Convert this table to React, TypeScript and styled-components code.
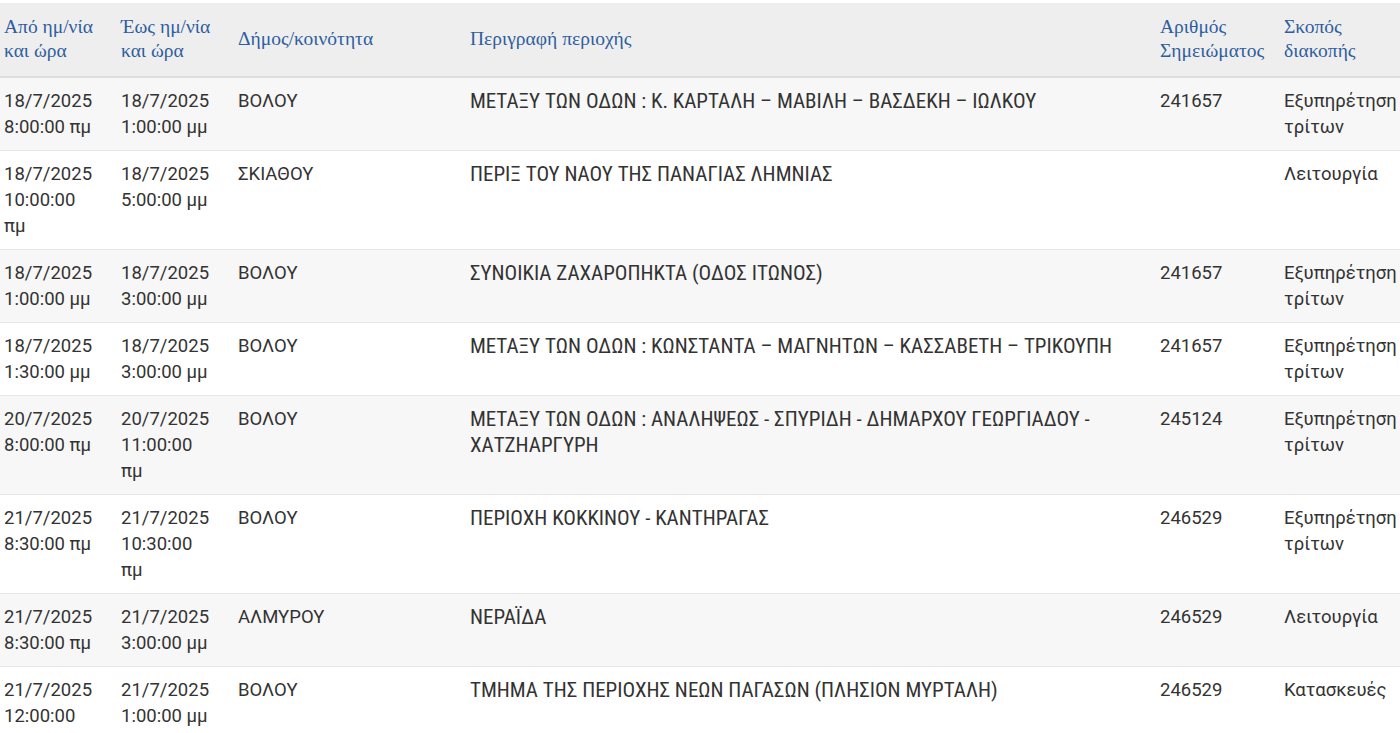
import React, { FC } from 'react'
import styled, { createGlobalStyle } from 'styled-components'

const GlobalStyle = createGlobalStyle`
    html, body {
        margin: 0;
        padding: 0;
        background: #fff;
        overflow: hidden;
    }
`

const Wrapper = styled.div`
    width: 1400px;
    padding-top: 3px;
    overflow: hidden;
    background: #fff;
`
const Table = styled.table`
    width: 1420px;
    table-layout: fixed;
    border-collapse: collapse;
    border-spacing: 0;
`
const HeadCell = styled.th`
    background: #eeeeee;
    border-bottom: 2px solid #dddddd;
    padding: 12px 20px 13px 4px;
    text-align: left;
    vertical-align: middle;
    font-family: "Liberation Serif", "DejaVu Serif", serif;
    font-weight: normal;
    font-size: 19.5px;
    line-height: 24px;
    color: #2f5e9e;
`
const Row = styled.tr<{ $striped: boolean }>`
    background: ${p => (p.$striped ? '#f7f7f7' : '#ffffff')};
    border-bottom: 1px solid #e6e6e6;
`
const Cell = styled.td<{ $narrow?: boolean }>`
    padding: 10px 20px 10px 4px;
    vertical-align: top;
    font-family: Roboto, "Noto Sans", sans-serif;
    font-stretch: ${p => (p.$narrow ? '85%' : '100%')};
    font-size: ${p => (p.$narrow ? '21px' : '18.5px')};
    line-height: 26px;
    color: #333333;
`

const widths = [117, 117, 232, 690, 124, 140]

const headers = [
    'Από ημ/νία και ώρα',
    'Έως ημ/νία και ώρα',
    'Δήμος/κοινότητα',
    'Περιγραφή περιοχής',
    'Αριθμός Σημειώματος',
    'Σκοπός διακοπής',
]

type Outage = {
    from: string
    to: string
    town: string
    area: string
    note: string
    reason: string
}

const rows: Outage[] = [
    { from: '18/7/2025 8:00:00 πμ', to: '18/7/2025 1:00:00 μμ', town: 'ΒΟΛΟΥ', area: 'ΜΕΤΑΞΥ ΤΩΝ ΟΔΩΝ : Κ. ΚΑΡΤΑΛΗ – ΜΑΒΙΛΗ – ΒΑΣΔΕΚΗ – ΙΩΛΚΟΥ', note: '241657', reason: 'Εξυπηρέτηση τρίτων' },
    { from: '18/7/2025 10:00:00 πμ', to: '18/7/2025 5:00:00 μμ', town: 'ΣΚΙΑΘΟΥ', area: 'ΠΕΡΙΞ ΤΟΥ ΝΑΟΥ ΤΗΣ ΠΑΝΑΓΙΑΣ ΛΗΜΝΙΑΣ', note: '', reason: 'Λειτουργία' },
    { from: '18/7/2025 1:00:00 μμ', to: '18/7/2025 3:00:00 μμ', town: 'ΒΟΛΟΥ', area: 'ΣΥΝΟΙΚΙΑ ΖΑΧΑΡΟΠΗΚΤΑ (ΟΔΟΣ ΙΤΩΝΟΣ)', note: '241657', reason: 'Εξυπηρέτηση τρίτων' },
    { from: '18/7/2025 1:30:00 μμ', to: '18/7/2025 3:00:00 μμ', town: 'ΒΟΛΟΥ', area: 'ΜΕΤΑΞΥ ΤΩΝ ΟΔΩΝ : ΚΩΝΣΤΑΝΤΑ – ΜΑΓΝΗΤΩΝ – ΚΑΣΣΑΒΕΤΗ – ΤΡΙΚΟΥΠΗ', note: '241657', reason: 'Εξυπηρέτηση τρίτων' },
    { from: '20/7/2025 8:00:00 πμ', to: '20/7/2025 11:00:00 πμ', town: 'ΒΟΛΟΥ', area: 'ΜΕΤΑΞΥ ΤΩΝ ΟΔΩΝ : ΑΝΑΛΗΨΕΩΣ - ΣΠΥΡΙΔΗ - ΔΗΜΑΡΧΟΥ ΓΕΩΡΓΙΑΔΟΥ - ΧΑΤΖΗΑΡΓΥΡΗ', note: '245124', reason: 'Εξυπηρέτηση τρίτων' },
    { from: '21/7/2025 8:30:00 πμ', to: '21/7/2025 10:30:00 πμ', town: 'ΒΟΛΟΥ', area: 'ΠΕΡΙΟΧΗ ΚΟΚΚΙΝΟΥ - ΚΑΝΤΗΡΑΓΑΣ', note: '246529', reason: 'Εξυπηρέτηση τρίτων' },
    { from: '21/7/2025 8:30:00 πμ', to: '21/7/2025 3:00:00 μμ', town: 'ΑΛΜΥΡΟΥ', area: 'ΝΕΡΑΪΔΑ', note: '246529', reason: 'Λειτουργία' },
    { from: '21/7/2025 12:00:00 μμ', to: '21/7/2025 1:00:00 μμ', town: 'ΒΟΛΟΥ', area: 'ΤΜΗΜΑ ΤΗΣ ΠΕΡΙΟΧΗΣ ΝΕΩΝ ΠΑΓΑΣΩΝ (ΠΛΗΣΙΟΝ ΜΥΡΤΑΛΗ)', note: '246529', reason: 'Κατασκευές' },
]

const App: FC = () => {
    return (
        <Wrapper>
            <GlobalStyle />
            <Table>
                <colgroup>
                    {widths.map((w, i) => (
                        <col key={i} style={{ width: w }} />
                    ))}
                </colgroup>
                <thead>
                    <tr>
                        {headers.map(h => (
                            <HeadCell key={h}>{h}</HeadCell>
                        ))}
                    </tr>
                </thead>
                <tbody>
                    {rows.map((r, i) => (
                        <Row key={`${r.from}-${r.area}`} $striped={i % 2 === 0}>
                            <Cell>{r.from}</Cell>
                            <Cell>{r.to}</Cell>
                            <Cell>{r.town}</Cell>
                            <Cell $narrow>{r.area}</Cell>
                            <Cell>{r.note}</Cell>
                            <Cell>{r.reason}</Cell>
                        </Row>
                    ))}
                </tbody>
            </Table>
        </Wrapper>
    )
}

export default App
